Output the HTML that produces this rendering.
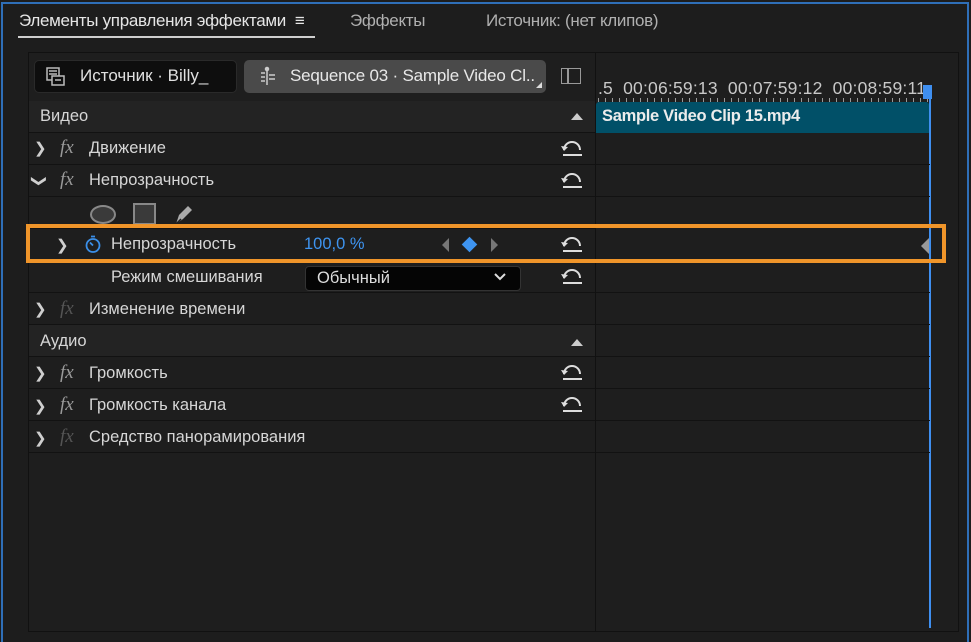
<!DOCTYPE html>
<html><head><meta charset="utf-8"><style>
*{margin:0;padding:0;box-sizing:border-box}
body{width:971px;height:627px;background:#1d1d1d;position:relative;overflow:hidden;font-family:"Liberation Sans",sans-serif;color:#d6d6d6;font-size:16.5px}
.a{position:absolute}
.t{position:absolute;white-space:nowrap}
.row{position:absolute;left:29px;width:566px;height:32px;border-bottom:1px solid #121212}
.rrow{position:absolute;left:596px;width:334px;height:32px;border-bottom:1px solid #121212}
.chev{position:absolute;font-size:15px;color:#cfcfcf}
.fx{position:absolute;font-family:"Liberation Serif",serif;font-style:italic;font-size:19px;color:#9a9a9a}
.rst{position:absolute;left:560px}
</style></head><body>
<div class="a" style="left:1px;top:2px;width:968px;height:640px;border:2px solid #2f6fb8;border-bottom:none"></div>
<div class="t" style="left:19px;top:11px;color:#e6e6e6;font-size:17px;letter-spacing:-0.3px">Элементы управления эффектами &nbsp;≡</div>
<div class="a" style="left:18px;top:36px;width:297px;height:2px;background:#cfcfcf"></div>
<div class="t" style="left:350px;top:11px;color:#b0b0b0;font-size:17px;letter-spacing:-0.3px">Эффекты</div>
<div class="t" style="left:486px;top:11px;color:#b0b0b0;font-size:17px;letter-spacing:-0.3px">Источник: (нет клипов)</div>
<div class="a" style="left:28px;top:52px;width:931px;height:580px;border:1px solid #111;background:#1e1e1e"></div>
<div class="a" style="left:595px;top:52px;width:1px;height:580px;background:#111"></div>
<div class="a" style="left:958px;top:52px;width:1px;height:580px;background:#111"></div>
<div class="a" style="left:34px;top:60px;width:203px;height:33px;background:#0e0e0e;border:1px solid #2a2a2a;border-radius:5px"></div>
<svg class="a" style="left:45px;top:66px" width="22" height="22" viewBox="0 0 22 22" fill="none" stroke="#bbb" stroke-width="1.5"><rect x="2" y="2" width="12" height="12"/><rect x="7" y="10" width="12" height="9" fill="#0e0e0e"/><path d="M10 14h6M4 5h8M4 8h8"/></svg>
<div class="t" style="left:80px;top:66px;color:#e0e0e0;font-size:17px">Источник · Billy_</div>
<div class="a" style="left:244px;top:60px;width:302px;height:33px;background:#4a4a4a;border-radius:5px"></div>
<svg class="a" style="left:256px;top:65px" width="22" height="22" viewBox="0 0 22 22" stroke="#ccc" stroke-width="1.5"><path d="M11 3v17M5 8h4M5 12h4M5 16h4M13 10h6M13 14h6"/><circle cx="11" cy="4" r="1.5" fill="#ccc"/></svg>
<div class="t" style="left:290px;top:66px;color:#e8e8e8;font-size:17px;letter-spacing:-0.2px">Sequence 03 · Sample Video Cl..</div>
<div class="a" style="left:536px;top:82px;width:0;height:0;border-left:6px solid transparent;border-bottom:6px solid #ddd"></div>
<div class="a" style="left:561px;top:68px;width:20px;height:16px;border:1.5px solid #999"></div>
<div class="a" style="left:567px;top:68px;width:1.5px;height:16px;background:#999"></div>
<div class="t" style="left:598px;top:78px;font-size:17.5px;color:#c8c8c8;letter-spacing:0.2px">.5 &nbsp;00:06:59:13 &nbsp;00:07:59:12 &nbsp;00:08:59:11</div>
<div class="a" style="left:598px;top:98px;width:330px;height:4px;background:repeating-linear-gradient(90deg,#999 0 1px,transparent 1px 7px)"></div>
<div class="a" style="left:923px;top:85px;width:9px;height:14px;background:#3f8ff0"></div>
<div class="a" style="left:929px;top:98px;width:2px;height:530px;background:#3f8ff0"></div>
<div class="a" style="left:596px;top:102px;width:333px;height:31px;background:#015068;border-radius:3px 3px 0 0"></div>
<div class="t" style="left:602px;top:107px;color:#ececec;font-weight:bold;font-size:16.5px;letter-spacing:-0.3px">Sample Video Clip 15.mp4</div>
<div class="row" style="top:101px;background:#232323"></div>
<div class="t" style="left:40px;top:107px">Видео</div>
<div class="a" style="left:571px;top:113px;border-left:6px solid transparent;border-right:6px solid transparent;border-bottom:7px solid #ccc"></div>
<div class="row" style="top:133px"></div>
<div class="chev" style="left:34px;top:139px">❯</div><div class="fx" style="left:60px;top:137px">fx</div><div class="t" style="left:89px;top:139px">Движение</div>
<div class="row" style="top:165px"></div>
<div class="chev" style="left:33px;top:172px;transform:rotate(90deg)">❯</div><div class="fx" style="left:60px;top:169px">fx</div><div class="t" style="left:89px;top:171px">Непрозрачность</div>
<div class="row" style="top:197px"></div>
<div class="a" style="left:90px;top:205px;width:26px;height:19px;border:2px solid #888;border-radius:50%;background:#3a3a3a"></div>
<div class="a" style="left:133px;top:203px;width:23px;height:22px;border:2px solid #888;background:#3a3a3a"></div>
<svg class="a" style="left:172px;top:202px" width="24" height="24" viewBox="0 0 24 24"><path d="M4 22l3-9 9-9 4 4-9 9z" fill="#aaa"/><path d="M4 22l5-5" stroke="#1e1e1e" stroke-width="1.5"/></svg>
<div class="row" style="top:229px"></div>
<div class="chev" style="left:56px;top:236px">❯</div>
<svg class="a" style="left:83px;top:234px" width="20" height="20" viewBox="0 0 20 20" fill="none" stroke="#3b8fe8" stroke-width="1.8"><circle cx="10" cy="11.5" r="6.5"/><path d="M10 11.5l-3-3M8 2.5h4"/></svg>
<div class="t" style="left:111px;top:235px">Непрозрачность</div>
<div class="t" style="left:304px;top:235px;color:#3e94f0">100,0 %</div>
<div class="a" style="left:442px;top:238px;border-top:7px solid transparent;border-bottom:7px solid transparent;border-right:7px solid #777"></div>
<div class="a" style="left:464px;top:239px;width:11px;height:11px;background:#3e94f0;transform:rotate(45deg)"></div>
<div class="a" style="left:491px;top:238px;border-top:7px solid transparent;border-bottom:7px solid transparent;border-left:7px solid #777"></div>
<div class="row" style="top:261px"></div>
<div class="t" style="left:111px;top:268px">Режим смешивания</div>
<div class="a" style="left:305px;top:266px;width:216px;height:25px;background:#050505;border:1px solid #333;border-radius:4px"></div>
<div class="t" style="left:317px;top:269px;color:#ddd">Обычный</div>
<svg class="a" style="left:493px;top:272px" width="14" height="10" viewBox="0 0 14 10"><path d="M2 2l5 5 5-5" stroke="#ddd" stroke-width="2" fill="none"/></svg>
<div class="row" style="top:293px"></div>
<div class="chev" style="left:34px;top:300px">❯</div><div class="fx" style="left:60px;top:298px;color:#555">fx</div><div class="t" style="left:89px;top:300px">Изменение времени</div>
<div class="row" style="top:325px;background:#232323"></div>
<div class="t" style="left:40px;top:332px">Аудио</div>
<div class="a" style="left:571px;top:339px;border-left:6px solid transparent;border-right:6px solid transparent;border-bottom:7px solid #ccc"></div>
<div class="row" style="top:357px"></div>
<div class="chev" style="left:34px;top:364px">❯</div><div class="fx" style="left:60px;top:362px">fx</div><div class="t" style="left:89px;top:364px">Громкость</div>
<div class="row" style="top:389px"></div>
<div class="chev" style="left:34px;top:397px">❯</div><div class="fx" style="left:60px;top:394px">fx</div><div class="t" style="left:89px;top:396px">Громкость канала</div>
<div class="row" style="top:421px"></div>
<div class="chev" style="left:34px;top:429px">❯</div><div class="fx" style="left:60px;top:426px;color:#555">fx</div><div class="t" style="left:89px;top:428px">Средство панорамирования</div>
<div class="rrow" style="top:133px"></div><div class="rrow" style="top:165px"></div><div class="rrow" style="top:197px;border:none"></div><div class="rrow" style="top:229px"></div><div class="rrow" style="top:261px"></div><div class="rrow" style="top:293px"></div><div class="rrow" style="top:325px"></div><div class="rrow" style="top:357px"></div><div class="rrow" style="top:389px"></div><div class="rrow" style="top:421px"></div>
<div class="a" style="left:921px;top:238px;border-top:8px solid transparent;border-bottom:8px solid transparent;border-right:8px solid #999"></div>
<svg width="0" height="0" style="position:absolute"><defs><g id="r"><path d="M4 13A8 8 0 0 1 20 13" fill="none" stroke="#ddd" stroke-width="2"/><path d="M1 9l3 5 4-4z" fill="#ddd"/><path d="M3 18h19" stroke="#ddd" stroke-width="2"/></g></defs></svg>
<svg class="rst" style="top:137px" width="26" height="22"><use href="#r"/></svg>
<svg class="rst" style="top:169px" width="26" height="22"><use href="#r"/></svg>
<svg class="rst" style="top:233px" width="26" height="22"><use href="#r"/></svg>
<svg class="rst" style="top:265px" width="26" height="22"><use href="#r"/></svg>
<svg class="rst" style="top:361px" width="26" height="22"><use href="#r"/></svg>
<svg class="rst" style="top:393px" width="26" height="22"><use href="#r"/></svg>
<div class="a" style="left:26px;top:224px;width:920px;height:39px;border:4px solid #f0952a"></div>
</body></html>
